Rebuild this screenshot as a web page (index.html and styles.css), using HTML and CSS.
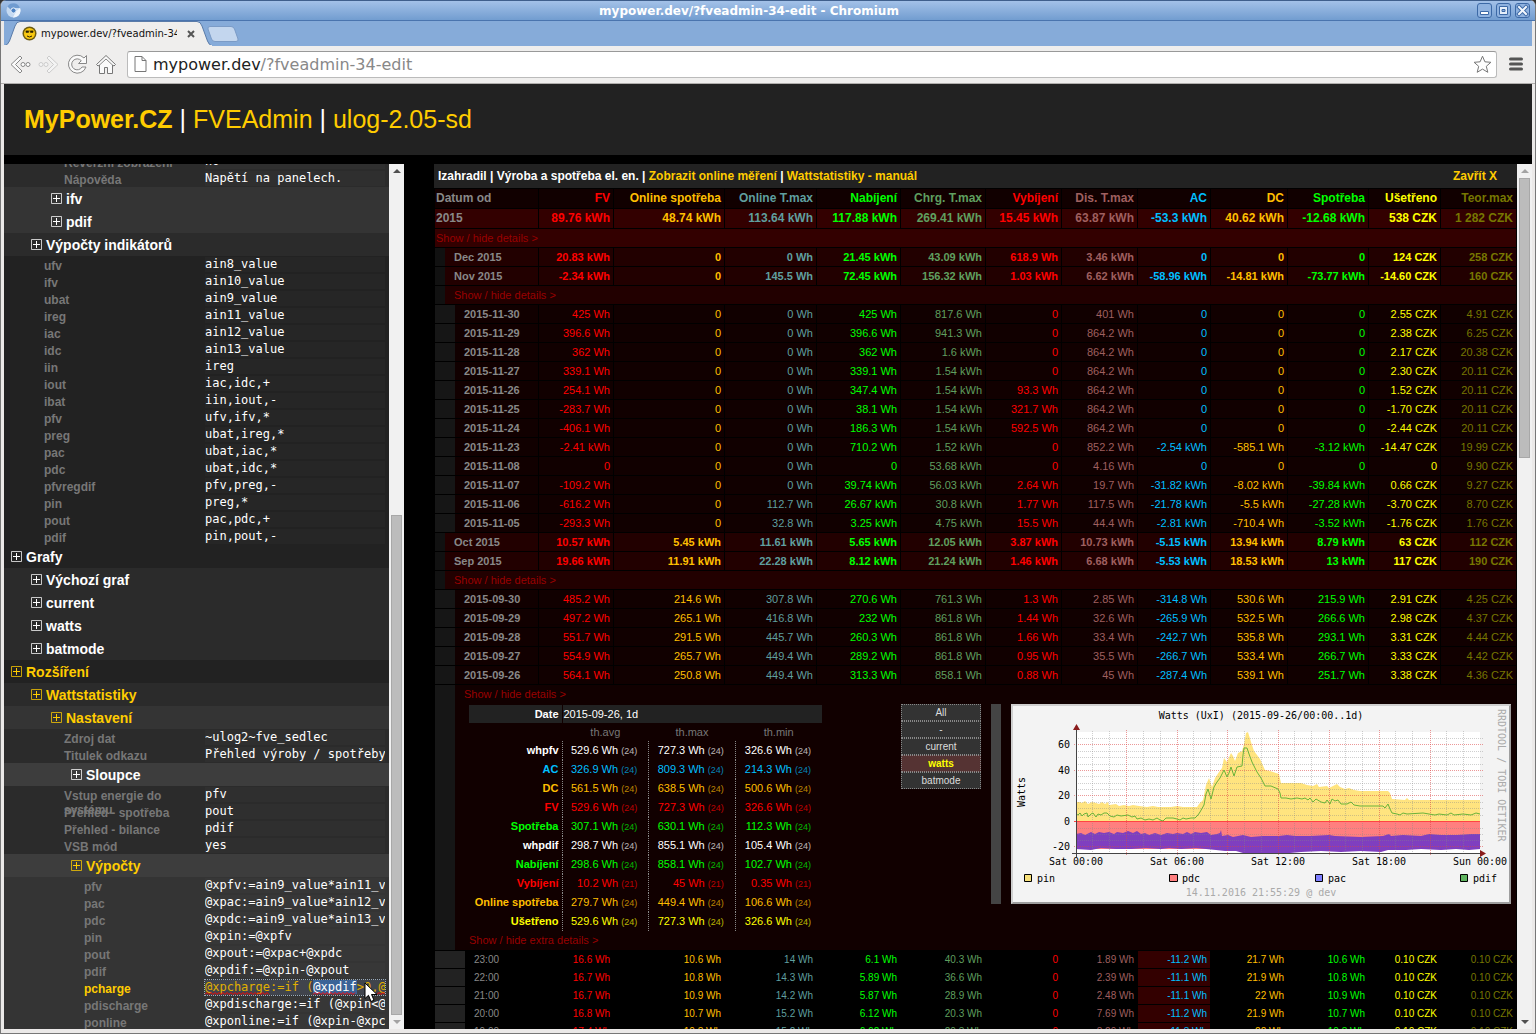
FILE: index.html
```html
<!DOCTYPE html>
<html lang="cs">
<head>
    <meta charset="UTF-8">
    <meta name="viewport" content="width=device-width, initial-scale=1.0">
    <title>mypower.dev/?fveadmin-34-edit</title>
    <link rel="stylesheet" href="styles.css">
</head>
<body>
    <svg class="defs" width="0" height="0" aria-hidden="true">
        <symbol id="plus" viewBox="0 0 11 11">
            <path d="M.5 .5h10v10h-10z" fill="none" stroke="currentColor" stroke-opacity=".75"/>
            <path d="M2 5.500h7M5.500 2v7" stroke="currentColor"/>
        </symbol>
    </svg>

    <div class="window">
        <div class="titlebar">
            <svg class="app-icon" width="15" height="15" viewBox="0 0 15 15" aria-hidden="true">
                <circle cx="7.500" cy="7.500" r="7" fill="#c5daf2"/>
                <path d="M1.500 3.500A7 7 0 0 1 14 5H7.500A2.800 2.800 0 0 0 5 7z" fill="#6f9bd0"/>
                <path d="M14 5A7 7 0 0 1 7 14.500L10 8.500z" fill="#eef5fc"/>
                <circle cx="7.500" cy="7.500" r="2.600" fill="#4d83c4" stroke="#e8f1fb"/>
            </svg>
            <span class="window-title">mypower.dev/?fveadmin-34-edit - Chromium</span>
            <div class="window-buttons">
                <button aria-label="Minimize"><svg width="13" height="13" viewBox="0 0 13 13"><path d="M2.500 7.500h8v3h-8z" fill="#fff" stroke="#3c69a6"/></svg></button>
                <button aria-label="Maximize"><svg width="13" height="13" viewBox="0 0 13 13"><path d="M2.500 2.500h8v8h-8z" fill="#e6effa" stroke="#3c69a6"/><path d="M5 5.500h3v2h-3z" fill="#8fb2df" stroke="#3c69a6"/></svg></button>
                <button aria-label="Close"><svg width="13" height="13" viewBox="0 0 13 13"><path d="M3 3l7 7M10 3l-7 7" stroke="#3c69a6" stroke-width="4" stroke-linecap="square"/><path d="M3 3l7 7M10 3l-7 7" stroke="#f2f7fd" stroke-width="2" stroke-linecap="square"/></svg></button>
            </div>
        </div>

        <div class="tabstrip">
            <div class="tab">
                <svg class="tab-shape" width="208" height="25" viewBox="0 0 208 25" aria-hidden="true">
                    <path d="M0 25Q4 24 5.500 20L11 5Q12.500 .5 16 .5H193Q196.500 .5 198 5L203.500 20Q205 24 208 25z" fill="#efeeed" stroke="#5a7ba8"/>
                    <path d="M0 24.500H208" stroke="#efeeed"/>
                </svg>
                <svg class="favicon" width="15" height="15" viewBox="0 0 15 15" aria-hidden="true">
                    <circle cx="7.500" cy="7.500" r="7" fill="#6b5a10"/>
                    <circle cx="7.500" cy="7.500" r="5.500" fill="#f8c810"/>
                    <path d="M4 5h2.500v1.500H4zM8.500 5H11v1.500H8.500zM3.500 5h8" fill="#2a2000" stroke="#2a2000" stroke-width=".5"/>
                    <path d="M5 10q2.500 2 5 0" fill="none" stroke="#2a2000"/>
                </svg>
                <span class="tab-title">mypower.dev/?fveadmin-34</span>
                <button class="tab-close" aria-label="Close tab"><svg width="8" height="8" viewBox="0 0 8 8"><path d="M1 1l6 6M7 1l-6 6" stroke="#555" stroke-width="2"/></svg></button>
            </div>
            <button class="new-tab" aria-label="New tab"><svg width="32" height="16" viewBox="0 0 32 16"><path d="M3 .5H24Q26.500 .5 27.500 3L31 13Q31.500 15.500 29 15.500H8Q5.500 15.500 4.500 13L1 3Q.5 .5 3 .5z" fill="#c3d6ee" stroke="#7b9bc6"/></svg></button>
        </div>

        <div class="toolbar">
            <button aria-label="Back"><svg width="22" height="21" viewBox="0 0 22 21"><path d="M11 2L2 10.500 11 19l2-2-6.500-6.500L13 4z" fill="#fafafa" stroke="#888"/><circle cx="14" cy="10.500" r="2" fill="#fff" stroke="#888"/><circle cx="19" cy="10.500" r="2" fill="#fff" stroke="#888"/></svg></button>
            <button aria-label="Forward"><svg width="22" height="21" viewBox="0 0 22 21"><path d="M11 2l9 8.500L11 19l-2-2 6.500-6.500L9 4z" fill="#f4f4f4" stroke="#ccc"/><circle cx="8" cy="10.500" r="2" fill="#f4f4f4" stroke="#ccc"/><circle cx="3" cy="10.500" r="2" fill="#f4f4f4" stroke="#ccc"/></svg></button>
            <button aria-label="Reload"><svg width="21" height="21" viewBox="0 0 21 21"><path d="M19.500 1.500v8h-8l2.800-2.800A5.500 5.500 0 1 0 15 13h4A9 9 0 1 1 17 4z" fill="#fafafa" stroke="#888"/></svg></button>
            <button aria-label="Home"><svg width="22" height="21" viewBox="0 0 22 21"><path d="M11 1.500L1.500 10.500l1.500 1.500 1.500-1v8.500h5v-6h3v6h5V11l1.500 1 1.500-1.500z" fill="#fafafa" stroke="#777"/><path d="M4.500 11L11 5l6.500 6" fill="none" stroke="#888"/></svg></button>
            <div class="address">
                <svg width="13" height="16" viewBox="0 0 13 16" aria-hidden="true"><path d="M1 .5h7l4 4v11H1zM8 .5v4h4" fill="#fff" stroke="#777"/></svg>
                <a href="#" class="url">mypower.dev<span>/?fveadmin-34-edit</span></a>
                <svg width="19" height="19" viewBox="0 0 19 19" aria-hidden="true"><path d="M9.500 1.200l2.400 5.600 6 .5-4.600 4 1.500 6-5.300-3.200-5.300 3.200 1.500-6-4.600-4 6-.5z" fill="#fff" stroke="#777" stroke-linejoin="round"/></svg>
            </div>
            <button class="menu-button" aria-label="Menu"><svg width="14" height="14" viewBox="0 0 14 14"><path d="M1.500 2h11M1.500 7h11M1.500 12h11" stroke="#555" stroke-width="3" stroke-linecap="round"/></svg></button>
        </div>

        <div class="page">
            <h1 class="header"><a href="#"><b>MyPower.CZ</b></a> | <a href="#">FVEAdmin</a> | <a href="#">ulog-2.05-sd</a></h1>

            <div class="content">
                <div class="sidebar">
                    <div class="tree">
                        <label class="field f2"><span>Reverzní zobrazení</span><input type="text" value="no"></label>
                        <label class="field f2"><span>Nápověda</span><input type="text" value="Napětí na panelech."></label>
                        <button class="node n2"><svg><use href="#plus"/></svg>ifv</button>
                        <button class="node n2"><svg><use href="#plus"/></svg>pdif</button>
                        <button class="node n1"><svg><use href="#plus"/></svg>Výpočty indikátorů</button>
                        <label class="field f1"><span>ufv</span><input type="text" value="ain8_value"></label>
                        <label class="field f1"><span>ifv</span><input type="text" value="ain10_value"></label>
                        <label class="field f1"><span>ubat</span><input type="text" value="ain9_value"></label>
                        <label class="field f1"><span>ireg</span><input type="text" value="ain11_value"></label>
                        <label class="field f1"><span>iac</span><input type="text" value="ain12_value"></label>
                        <label class="field f1"><span>idc</span><input type="text" value="ain13_value"></label>
                        <label class="field f1"><span>iin</span><input type="text" value="ireg"></label>
                        <label class="field f1"><span>iout</span><input type="text" value="iac,idc,+"></label>
                        <label class="field f1"><span>ibat</span><input type="text" value="iin,iout,-"></label>
                        <label class="field f1"><span>pfv</span><input type="text" value="ufv,ifv,*"></label>
                        <label class="field f1"><span>preg</span><input type="text" value="ubat,ireg,*"></label>
                        <label class="field f1"><span>pac</span><input type="text" value="ubat,iac,*"></label>
                        <label class="field f1"><span>pdc</span><input type="text" value="ubat,idc,*"></label>
                        <label class="field f1"><span>pfvregdif</span><input type="text" value="pfv,preg,-"></label>
                        <label class="field f1"><span>pin</span><input type="text" value="preg,*"></label>
                        <label class="field f1"><span>pout</span><input type="text" value="pac,pdc,+"></label>
                        <label class="field f1"><span>pdif</span><input type="text" value="pin,pout,-"></label>
                        <button class="node n0"><svg><use href="#plus"/></svg>Grafy</button>
                        <button class="node n1"><svg><use href="#plus"/></svg>Výchozí graf</button>
                        <button class="node n1"><svg><use href="#plus"/></svg>current</button>
                        <button class="node n1"><svg><use href="#plus"/></svg>watts</button>
                        <button class="node n1"><svg><use href="#plus"/></svg>batmode</button>
                        <button class="node n0 open"><svg><use href="#plus"/></svg>Rozšíření</button>
                        <button class="node n1 open"><svg><use href="#plus"/></svg>Wattstatistiky</button>
                        <button class="node n2 open"><svg><use href="#plus"/></svg>Nastavení</button>
                        <label class="field f2"><span>Zdroj dat</span><input type="text" value="~ulog2~fve_sedlec"></label>
                        <label class="field f2"><span>Titulek odkazu</span><input type="text" value="Přehled výroby / spotřeby"></label>
                        <button class="node n3"><svg><use href="#plus"/></svg>Sloupce</button>
                        <label class="field f2"><span>Vstup energie do systému</span><input type="text" value="pfv"></label>
                        <label class="field f2"><span>Přehled - spotřeba</span><input type="text" value="pout"></label>
                        <label class="field f2"><span>Přehled - bilance</span><input type="text" value="pdif"></label>
                        <label class="field f2"><span>VSB mód</span><input type="text" value="yes"></label>
                        <button class="node n3 open"><svg><use href="#plus"/></svg>Výpočty</button>
                        <label class="field f3"><span>pfv</span><input type="text" value="@xpfv:=ain9_value*ain11_value"></label>
                        <label class="field f3"><span>pac</span><input type="text" value="@xpac:=ain9_value*ain12_value"></label>
                        <label class="field f3"><span>pdc</span><input type="text" value="@xpdc:=ain9_value*ain13_value"></label>
                        <label class="field f3"><span>pin</span><input type="text" value="@xpin:=@xpfv"></label>
                        <label class="field f3"><span>pout</span><input type="text" value="@xpout:=@xpac+@xpdc"></label>
                        <label class="field f3"><span>pdif</span><input type="text" value="@xpdif:=@xpin-@xpout"></label>
                        <label class="field f3 active"><span>pcharge</span><input type="text" id="pcharge" value="@xpcharge:=if (@xpdif>0,@xpdif,0)">
                            <svg class="spelling" width="180" height="3" viewBox="0 0 180 3" aria-hidden="true"><path d="M0 2.500l2-2 2 2 2-2 2 2 2-2 2 2 2-2 2 2 2-2 2 2 2-2 2 2 2-2 2 2 2-2 2 2 2-2 2 2 2-2 2 2 2-2 2 2 2-2 2 2 2-2 2 2 2-2 2 2 2-2 2 2 2-2 2 2M108 2.500l2-2 2 2 2-2 2 2 2-2 2 2 2-2 2 2 2-2 2 2 2-2 2 2 2-2 2 2 2-2 2 2 2-2 2 2 2-2 2 2 2-2M172 2.500l2-2 2 2 2-2 2 2" fill="none" stroke="#f00"/></svg>
                            <svg class="cursor" width="14" height="21" viewBox="0 0 14 21" aria-hidden="true"><path d="M1 1v15.500l3.500-3.200L7 19.500l3-1.300-2.500-5.700H13z" fill="#fff" stroke="#000"/></svg>
                        </label>
                        <label class="field f3"><span>pdischarge</span><input type="text" value="@xpdischarge:=if (@xpin<@xpout,@xpdif,0)"></label>
                        <label class="field f3"><span>ponline</span><input type="text" value="@xponline:=if (@xpin-@xpcharge)"></label>
                    </div>
                    <div class="scrollbar side-scroll">
                        <i class="up"></i><div class="track"><div class="thumb"></div></div><i class="down"></i>
                    </div>
                </div>

                <div class="main">
                    <div class="stats-wrap">
                        <div class="topbar">
                            <div>Izahradil | Výroba a spotřeba el. en. | <a href="#">Zobrazit online měření</a> | <a href="#">Wattstatistiky - manuál</a></div>
                            <a href="#">Zavřít X</a>
                        </div>
                        <table class="stats">
                            <colgroup>
                                <col class="w-date"><col class="w-fv"><col class="w-online"><col class="w-onmax"><col class="w-nab"><col class="w-chrg"><col class="w-vyb"><col class="w-dis"><col class="w-ac"><col class="w-dc"><col class="w-spot"><col class="w-usetr"><col class="w-teor">
                            </colgroup>
                            <tbody>
                                <tr class="head"><th>Datum od</th><td>FV</td><td>Online spotřeba</td><td>Online T.max</td><td>Nabíjení</td><td>Chrg. T.max</td><td>Vybíjení</td><td>Dis. T.max</td><td>AC</td><td>DC</td><td>Spotřeba</td><td>Ušetřeno</td><td>Teor.max</td></tr>
                                <tr class="year"><th>2015</th><td>89.76 kWh</td><td>48.74 kWh</td><td>113.64 kWh</td><td>117.88 kWh</td><td>269.41 kWh</td><td>15.45 kWh</td><td>63.87 kWh</td><td>-53.3 kWh</td><td>40.62 kWh</td><td>-12.68 kWh</td><td>538 CZK</td><td>1 282 CZK</td></tr>
                                <tr class="year more"><td colspan="13"><a href="#">Show / hide details &gt;</a></td></tr>
                                <tr class="month"><th>Dec 2015</th><td>20.83 kWh</td><td>0</td><td>0 Wh</td><td>21.45 kWh</td><td>43.09 kWh</td><td>618.9 Wh</td><td>3.46 kWh</td><td>0</td><td>0</td><td>0</td><td>124 CZK</td><td>258 CZK</td></tr>
                                <tr class="month"><th>Nov 2015</th><td>-2.34 kWh</td><td>0</td><td>145.5 Wh</td><td>72.45 kWh</td><td>156.32 kWh</td><td>1.03 kWh</td><td>6.62 kWh</td><td>-58.96 kWh</td><td>-14.81 kWh</td><td>-73.77 kWh</td><td>-14.60 CZK</td><td>160 CZK</td></tr>
                                <tr class="month more"><td colspan="13"><a href="#">Show / hide details &gt;</a></td></tr>
                                <tr class="day"><th>2015-11-30</th><td>425 Wh</td><td>0</td><td>0 Wh</td><td>425 Wh</td><td>817.6 Wh</td><td>0</td><td>401 Wh</td><td>0</td><td>0</td><td>0</td><td>2.55 CZK</td><td>4.91 CZK</td></tr>
                                <tr class="day"><th>2015-11-29</th><td>396.6 Wh</td><td>0</td><td>0 Wh</td><td>396.6 Wh</td><td>941.3 Wh</td><td>0</td><td>864.2 Wh</td><td>0</td><td>0</td><td>0</td><td>2.38 CZK</td><td>6.25 CZK</td></tr>
                                <tr class="day"><th>2015-11-28</th><td>362 Wh</td><td>0</td><td>0 Wh</td><td>362 Wh</td><td>1.6 kWh</td><td>0</td><td>864.2 Wh</td><td>0</td><td>0</td><td>0</td><td>2.17 CZK</td><td>20.38 CZK</td></tr>
                                <tr class="day"><th>2015-11-27</th><td>339.1 Wh</td><td>0</td><td>0 Wh</td><td>339.1 Wh</td><td>1.54 kWh</td><td>0</td><td>864.2 Wh</td><td>0</td><td>0</td><td>0</td><td>2.30 CZK</td><td>20.11 CZK</td></tr>
                                <tr class="day"><th>2015-11-26</th><td>254.1 Wh</td><td>0</td><td>0 Wh</td><td>347.4 Wh</td><td>1.54 kWh</td><td>93.3 Wh</td><td>864.2 Wh</td><td>0</td><td>0</td><td>0</td><td>1.52 CZK</td><td>20.11 CZK</td></tr>
                                <tr class="day"><th>2015-11-25</th><td>-283.7 Wh</td><td>0</td><td>0 Wh</td><td>38.1 Wh</td><td>1.54 kWh</td><td>321.7 Wh</td><td>864.2 Wh</td><td>0</td><td>0</td><td>0</td><td>-1.70 CZK</td><td>20.11 CZK</td></tr>
                                <tr class="day"><th>2015-11-24</th><td>-406.1 Wh</td><td>0</td><td>0 Wh</td><td>186.3 Wh</td><td>1.54 kWh</td><td>592.5 Wh</td><td>864.2 Wh</td><td>0</td><td>0</td><td>0</td><td>-2.44 CZK</td><td>20.11 CZK</td></tr>
                                <tr class="day"><th>2015-11-23</th><td>-2.41 kWh</td><td>0</td><td>0 Wh</td><td>710.2 Wh</td><td>1.52 kWh</td><td>0</td><td>852.2 Wh</td><td>-2.54 kWh</td><td>-585.1 Wh</td><td>-3.12 kWh</td><td>-14.47 CZK</td><td>19.99 CZK</td></tr>
                                <tr class="day"><th>2015-11-08</th><td>0</td><td>0</td><td>0 Wh</td><td>0</td><td>53.68 kWh</td><td>0</td><td>4.16 Wh</td><td>0</td><td>0</td><td>0</td><td>0</td><td>9.90 CZK</td></tr>
                                <tr class="day"><th>2015-11-07</th><td>-109.2 Wh</td><td>0</td><td>0 Wh</td><td>39.74 kWh</td><td>56.03 kWh</td><td>2.64 Wh</td><td>19.7 Wh</td><td>-31.82 kWh</td><td>-8.02 kWh</td><td>-39.84 kWh</td><td>0.66 CZK</td><td>9.27 CZK</td></tr>
                                <tr class="day"><th>2015-11-06</th><td>-616.2 Wh</td><td>0</td><td>112.7 Wh</td><td>26.67 kWh</td><td>30.8 kWh</td><td>1.77 Wh</td><td>117.5 Wh</td><td>-21.78 kWh</td><td>-5.5 kWh</td><td>-27.28 kWh</td><td>-3.70 CZK</td><td>8.70 CZK</td></tr>
                                <tr class="day"><th>2015-11-05</th><td>-293.3 Wh</td><td>0</td><td>32.8 Wh</td><td>3.25 kWh</td><td>4.75 kWh</td><td>15.5 Wh</td><td>44.4 Wh</td><td>-2.81 kWh</td><td>-710.4 Wh</td><td>-3.52 kWh</td><td>-1.76 CZK</td><td>1.76 CZK</td></tr>
                                <tr class="month"><th>Oct 2015</th><td>10.57 kWh</td><td>5.45 kWh</td><td>11.61 kWh</td><td>5.65 kWh</td><td>12.05 kWh</td><td>3.87 kWh</td><td>10.73 kWh</td><td>-5.15 kWh</td><td>13.94 kWh</td><td>8.79 kWh</td><td>63 CZK</td><td>112 CZK</td></tr>
                                <tr class="month"><th>Sep 2015</th><td>19.66 kWh</td><td>11.91 kWh</td><td>22.28 kWh</td><td>8.12 kWh</td><td>21.24 kWh</td><td>1.46 kWh</td><td>6.68 kWh</td><td>-5.53 kWh</td><td>18.53 kWh</td><td>13 kWh</td><td>117 CZK</td><td>190 CZK</td></tr>
                                <tr class="month more"><td colspan="13"><a href="#">Show / hide details &gt;</a></td></tr>
                                <tr class="day"><th>2015-09-30</th><td>485.2 Wh</td><td>214.6 Wh</td><td>307.8 Wh</td><td>270.6 Wh</td><td>761.3 Wh</td><td>1.3 Wh</td><td>2.85 Wh</td><td>-314.8 Wh</td><td>530.6 Wh</td><td>215.9 Wh</td><td>2.91 CZK</td><td>4.25 CZK</td></tr>
                                <tr class="day"><th>2015-09-29</th><td>497.2 Wh</td><td>265.1 Wh</td><td>416.8 Wh</td><td>232 Wh</td><td>861.8 Wh</td><td>1.44 Wh</td><td>32.6 Wh</td><td>-265.9 Wh</td><td>532.5 Wh</td><td>266.6 Wh</td><td>2.98 CZK</td><td>4.37 CZK</td></tr>
                                <tr class="day"><th>2015-09-28</th><td>551.7 Wh</td><td>291.5 Wh</td><td>445.7 Wh</td><td>260.3 Wh</td><td>861.8 Wh</td><td>1.66 Wh</td><td>33.4 Wh</td><td>-242.7 Wh</td><td>535.8 Wh</td><td>293.1 Wh</td><td>3.31 CZK</td><td>4.44 CZK</td></tr>
                                <tr class="day"><th>2015-09-27</th><td>554.9 Wh</td><td>265.7 Wh</td><td>449.4 Wh</td><td>289.2 Wh</td><td>861.8 Wh</td><td>0.95 Wh</td><td>35.5 Wh</td><td>-266.7 Wh</td><td>533.4 Wh</td><td>266.7 Wh</td><td>3.33 CZK</td><td>4.42 CZK</td></tr>
                                <tr class="day"><th>2015-09-26</th><td>564.1 Wh</td><td>250.8 Wh</td><td>449.4 Wh</td><td>313.3 Wh</td><td>858.1 Wh</td><td>0.88 Wh</td><td>45 Wh</td><td>-287.4 Wh</td><td>539.1 Wh</td><td>251.7 Wh</td><td>3.38 CZK</td><td>4.36 CZK</td></tr>
                                <tr class="day more">
                                    <td colspan="13">
                                        <a href="#">Show / hide details &gt;</a>
                                        <div class="details">
                                            <div class="summary">
                                                <table class="avg">
                                                    <tbody>
                                                        <tr class="date"><th>Date</th><td colspan="3">2015-09-26, 1d</td></tr>
                                                        <tr class="cols"><th></th><td>th.avg</td><td>th.max</td><td>th.min</td></tr>
                                                        <tr class="white"><th>whpfv</th><td>529.6 Wh <small>(24)</small></td><td>727.3 Wh <small>(24)</small></td><td>326.6 Wh <small>(24)</small></td></tr>
                                                        <tr class="blue"><th>AC</th><td>326.9 Wh <small>(24)</small></td><td>809.3 Wh <small>(24)</small></td><td>214.3 Wh <small>(24)</small></td></tr>
                                                        <tr class="orange"><th>DC</th><td>561.5 Wh <small>(24)</small></td><td>638.5 Wh <small>(24)</small></td><td>500.6 Wh <small>(24)</small></td></tr>
                                                        <tr class="red"><th>FV</th><td>529.6 Wh <small>(24)</small></td><td>727.3 Wh <small>(24)</small></td><td>326.6 Wh <small>(24)</small></td></tr>
                                                        <tr class="green"><th>Spotřeba</th><td>307.1 Wh <small>(24)</small></td><td>630.1 Wh <small>(24)</small></td><td>112.3 Wh <small>(24)</small></td></tr>
                                                        <tr class="white"><th>whpdif</th><td>298.7 Wh <small>(24)</small></td><td>855.1 Wh <small>(24)</small></td><td>105.4 Wh <small>(24)</small></td></tr>
                                                        <tr class="green"><th>Nabíjení</th><td>298.6 Wh <small>(24)</small></td><td>858.1 Wh <small>(24)</small></td><td>102.7 Wh <small>(24)</small></td></tr>
                                                        <tr class="red"><th>Vybíjení</th><td>10.2 Wh <small>(21)</small></td><td>45 Wh <small>(21)</small></td><td>0.35 Wh <small>(21)</small></td></tr>
                                                        <tr class="orange"><th>Online spotřeba</th><td>279.7 Wh <small>(24)</small></td><td>449.4 Wh <small>(24)</small></td><td>106.6 Wh <small>(24)</small></td></tr>
                                                        <tr class="yellow"><th>Ušetřeno</th><td>529.6 Wh <small>(24)</small></td><td>727.3 Wh <small>(24)</small></td><td>326.6 Wh <small>(24)</small></td></tr>
                                                    </tbody>
                                                </table>
                                                <a href="#">Show / hide extra details &gt;</a>
                                            </div>
                                            <div class="graphs">
                                                <button>All</button>
                                                <button>-</button>
                                                <button>current</button>
                                                <button class="selected">watts</button>
                                                <button>batmode</button>
                                            </div>
                                            <div class="divider"></div>
                                            <svg class="chart" width="500" height="200" viewBox="0 0 500 200" role="img" aria-label="Watts (UxI)">
                                                <path d="M0 0h500v200H0z" fill="#f3f3f3"/>
                                                <path d="M0 0h500l-2 2H2v196l-2 2z" fill="#cfcfcf"/>
                                                <path d="M500 0v200H0l2-2h496V2z" fill="#9e9e9e"/>
                                                <path d="M65 28h404v121H65z" fill="#fff"/>
                                                <path d="M65 117V98L69 98 71 99 74 97 77 100 81 98 85 99 88 100 91 98 94 100 97 98 98 101 105 100 108 102 113 101 118 102 122 101 128 102 136 103 142 102 147 103 160 103 166 102 172 103 186 103 188 100 192 96 195 81 198 74 201 83 204 74 208 68 211 64 213 54 216 58 220 49 222 52 224 57 227 49 231 47 233 40 235 29 237 28 240 38 243 47 246 51 249 55 254 66 259 67 268 70 270 79 290 79 296 81 302 82 306 80 308 83 316 82 318 84 322 82 326 80 329 83 334 85 338 84 343 86 349 87 377 87 379 89 381 95 394 96 396 94 398 96 469 96V117z" fill="#ffe47f"/>
                                                <path d="M65 117h404v28H65z" fill="#ff7f7f"/>
                                                <path d="M65 130L70 129 74 131 80 128 84 130 88 128 93 129 98 128 103 130 106 128 112 129 117 127 122 129 126 127 130 130 134 129 138 131 144 129 150 131 156 129 162 130 166 129 172 130 176 128 180 130 184 128 190 129 196 128 200 131 206 130 209 129 210 126 211 132 217 131 222 133 232 131 240 133 252 132 268 132 276 131 284 132 300 132 318 131 324 132 350 133 372 132 378 130 380 132 392 131 410 132 418 130 430 131 446 131 460 130 469 130V145L458 146 445 145 430 146 410 145 395 146 377 146 370 148 350 147 330 148 310 147 290 148 279 149 232 149 225 147 214 147 205 146 195 145 185 144 170 145 158 144 150 145 135 144 120 145 105 145 90 144 80 146 65 145z" fill="#7f3fbf"/>
                                                <g fill="none" stroke="#888" stroke-opacity=".4" stroke-dasharray="1 1">
                                                    <path d="M65 34.500h407M65 47.500h407M65 53.500h407M65 60.500h407M65 72.500h407M65 79.500h407M65 85.500h407M65 98.500h407M65 104.500h407M65 111.500h407M65 124.500h407M65 130.500h407M65 136.500h407"/>
                                                    <path d="M81.500 27v123M98.500 27v123M132.500 27v123M149.500 27v123M182.500 27v123M199.500 27v123M233.500 27v123M250.500 27v123M283.500 27v123M300.500 27v123M334.500 27v123M351.500 27v123M384.500 27v123M401.500 27v123M435.500 27v123M452.500 27v123"/>
                                                </g>
                                                <g fill="none" stroke="#d44" stroke-opacity=".55" stroke-dasharray="1 1">
                                                    <path d="M63 40.500h410M63 66.500h410M63 91.500h410M63 142.500h410"/>
                                                    <path d="M115.500 26v126M166.500 26v126M216.500 26v126M267.500 26v126M318.500 26v126M368.500 26v126M419.500 26v126"/>
                                                </g>
                                                <path d="M63 117.500h406" stroke="#f44"/>
                                                <path d="M65 110L67 111 69 109 71 112 73 110 76 109 77 113 80 110 82 109 85 113 87 110 90 111 93 109 96 109 99 112 103 113 106 111 110 112 117 111 121 113 124 112 126 115 130 114 134 116 138 115 142 116 146 114 149 116 152 117 155 114 162 114 166 115 169 116 172 114 175 115 180 114 184 114 187 111 189 108 193 101 195 90 197 85 200 95 203 83 206 78 209 74 213 66 216 73 218 69 220 63 223 72 226 63 231 62 232 51 233 44 236 44 238 50 241 58 246 68 250 74 254 82 260 82 267 85 269 89 270 94 275 94 280 95 286 94 291 95 294 94 297 96 299 94 302 98 305 95 310 98 314 99 316 96 319 100 321 95 324 97 327 96 330 100 336 100 340 98 343 101 349 102 372 102 374 104 377 100 379 105 381 109 386 110 389 111 392 109 396 110 412 109 424 111 428 110 436 111 440 109 443 111 452 110 460 111 465 109 469 110" fill="none" stroke="#6bb33a"/>
                                                <path d="M65.500 153V24M61 149.500h410" stroke="#444"/>
                                                <path d="M62 26l3.500-6 3.500 6zM469 146l6 3.500-6 3.500z" fill="#8a1c1c"/>
                                                <g class="chart-text">
                                                    <text x="250" y="15" text-anchor="middle">Watts (UxI) (2015-09-26/00:00..1d)</text>
                                                    <g text-anchor="end">
                                                        <text x="59" y="44">60</text>
                                                        <text x="59" y="70">40</text>
                                                        <text x="59" y="95">20</text>
                                                        <text x="59" y="121">0</text>
                                                        <text x="59" y="146">-20</text>
                                                    </g>
                                                    <g text-anchor="middle">
                                                        <text x="65" y="161">Sat 00:00</text>
                                                        <text x="166" y="161">Sat 06:00</text>
                                                        <text x="267" y="161">Sat 12:00</text>
                                                        <text x="368" y="161">Sat 18:00</text>
                                                        <text x="469" y="161">Sun 00:00</text>
                                                        <text transform="translate(14 88) rotate(-90)">Watts</text>
                                                    </g>
                                                    <text x="26" y="178">pin</text>
                                                    <text x="171" y="178">pdc</text>
                                                    <text x="317" y="178">pac</text>
                                                    <text x="462" y="178">pdif</text>
                                                    <text class="faint" x="250" y="192" text-anchor="middle">14.11.2016 21:55:29 @ dev</text>
                                                    <text class="faint" transform="translate(487 5) rotate(90)">RRDTOOL / TOBI OETIKER</text>
                                                </g>
                                                <g stroke="#000">
                                                    <path d="M13.500 170.500h7v7h-7z" fill="#f7e07a"/>
                                                    <path d="M158.500 170.500h8v7h-8z" fill="#ff7f7f"/>
                                                    <path d="M304.500 170.500h7v7h-7z" fill="#7f7fff"/>
                                                    <path d="M449.500 170.500h7v7h-7z" fill="#5fb35f"/>
                                                </g>
                                            </svg>
                                        </div>
                                    </td>
                                </tr>
                                <tr class="hour"><th>23:00</th><td>16.6 Wh</td><td>10.6 Wh</td><td>14 Wh</td><td>6.1 Wh</td><td>40.3 Wh</td><td>0</td><td>1.89 Wh</td><td>-11.2 Wh</td><td>21.7 Wh</td><td>10.6 Wh</td><td>0.10 CZK</td><td>0.10 CZK</td></tr>
                                <tr class="hour"><th>22:00</th><td>16.7 Wh</td><td>10.8 Wh</td><td>14.3 Wh</td><td>5.89 Wh</td><td>36.6 Wh</td><td>0</td><td>2.39 Wh</td><td>-11.1 Wh</td><td>21.9 Wh</td><td>10.8 Wh</td><td>0.10 CZK</td><td>0.10 CZK</td></tr>
                                <tr class="hour"><th>21:00</th><td>16.7 Wh</td><td>10.9 Wh</td><td>14.2 Wh</td><td>5.87 Wh</td><td>28.9 Wh</td><td>0</td><td>2.48 Wh</td><td>-11.1 Wh</td><td>22 Wh</td><td>10.9 Wh</td><td>0.10 CZK</td><td>0.10 CZK</td></tr>
                                <tr class="hour"><th>20:00</th><td>16.8 Wh</td><td>10.7 Wh</td><td>15.2 Wh</td><td>6.12 Wh</td><td>20.3 Wh</td><td>0</td><td>7.69 Wh</td><td>-11.2 Wh</td><td>21.9 Wh</td><td>10.7 Wh</td><td>0.10 CZK</td><td>0.10 CZK</td></tr>
                                <tr class="hour"><th>19:00</th><td>17.4 Wh</td><td>10.8 Wh</td><td>15.2 Wh</td><td>6.62 Wh</td><td>20.3 Wh</td><td>0</td><td>8.29 Wh</td><td>-11.3 Wh</td><td>22 Wh</td><td>10.8 Wh</td><td>0.10 CZK</td><td>0.10 CZK</td></tr>
                            </tbody>
                        </table>
                    </div>
                    <div class="scrollbar main-scroll">
                        <i class="up off"></i><div class="track"><div class="thumb"></div></div><i class="down"></i>
                    </div>
                </div>
            </div>
        </div>
    </div>

    <script>
        // keep the edited expression focused, with the variable selected
        let field = document.getElementById("pcharge");
        let start = field.value.indexOf("@xpdif");
        field.focus({ preventScroll: true });
        field.setSelectionRange(start, start + 6);
    </script>
</body>
</html>
```

FILE: styles.css
```css
* {
    box-sizing: border-box;
}
body {
    margin: 0;
    height: 100vh;
    overflow: hidden;
    background-color: #333;
    font-family: "Liberation Sans", Arial, sans-serif;
    font-size: 12px;
}
a {
    color: inherit;
    text-decoration: none;
}
button {
    margin: 0;
    padding: 0;
    border: none;
    background: none;
    font: inherit;
    color: inherit;
    cursor: pointer;
}
svg {
    display: block;
    flex: none;
}
.defs {
    position: absolute;
}

/* browser window */
.window {
    display: flex;
    flex-direction: column;
    height: 100vh;
    background-color: #ebe9e8;
    border: solid #777;
    border-width: 0 1px 1px;
    border-radius: 6px 6px 0 0;
    overflow: hidden;
}
.titlebar {
    display: flex;
    align-items: center;
    height: 21px;
    padding: 0 5px;
    border-top: 1px solid #3f5f8c;
    border-bottom: 1px solid #4a74ae;
    background: linear-gradient(#a3c1e8, #729dd0);
    color: #fff;
}
.window-title {
    flex: 1;
    text-align: center;
    font: bold 12px "DejaVu Sans", sans-serif;
}
.window-buttons {
    display: flex;
    gap: 4px;
}
.window-buttons button {
    width: 15px;
    height: 15px;
    border: 1px solid #3c69a6;
    border-radius: 3px;
    background-color: #8fb2df;
}
.tabstrip {
    display: flex;
    height: 25px;
    margin: 0 3px;
    background-color: #86abd9;
}
.tab {
    position: relative;
    display: flex;
    align-items: center;
    width: 208px;
    padding: 0 17px 0 18px;
}
.tab-shape {
    position: absolute;
    left: 0;
    top: 0;
}
.favicon,
.tab-title,
.tab-close {
    position: relative;
}
.tab-title {
    flex: 1;
    margin: 0 10px 0 4px;
    overflow: hidden;
    white-space: nowrap;
    font: 10px "DejaVu Sans", sans-serif;
    color: #111;
}
.new-tab {
    align-self: center;
    margin-left: -5px;
}
.toolbar {
    display: flex;
    align-items: center;
    gap: 7px;
    height: 38px;
    padding: 0 12px 1px 8px;
    border-bottom: 1px solid #b0aeac;
    background-color: #efeeed;
}
.address {
    flex: 1;
    display: flex;
    align-items: center;
    gap: 6px;
    height: 27px;
    margin-left: 3px;
    padding: 0 4px 0 6px;
    border: 1px solid #bbb;
    border-top-color: #999;
    border-radius: 3px;
    background-color: #fff;
}
.url {
    flex: 1;
    font: 16px "DejaVu Sans", sans-serif;
    color: #222;
}
.url span {
    color: #888;
}
.menu-button {
    margin-left: 5px;
}

/* page */
.page {
    flex: 1;
    display: flex;
    flex-direction: column;
    min-height: 0;
    margin: 0 3px 4px;
    background-color: #000;
}
.header {
    margin: 0 0 9px;
    padding: 0 20px;
    background-color: #222;
    color: #fff;
    font-size: 25px;
    font-weight: normal;
    line-height: 71px;
}
.header a {
    color: #fc0;
}
.content {
    flex: 1;
    display: flex;
    gap: 30px;
    min-height: 0;
}
.sidebar {
    display: flex;
    width: 400px;
    overflow: hidden;
}
.tree {
    flex: 1;
    margin-top: -11px;
}
.node {
    display: flex;
    align-items: center;
    gap: 4px;
    width: 100%;
    height: 23px;
    color: #fff;
    font-size: 14px;
    font-weight: bold;
}
.node svg {
    width: 11px;
    height: 11px;
}
.node.open {
    color: #fc0;
}
.n0 {
    padding-left: 7px;
    background-color: #222;
}
.n1 {
    padding-left: 27px;
    background-color: #2b2b2b;
}
.n2 {
    padding-left: 47px;
    background-color: #343434;
}
.n3 {
    padding-left: 67px;
    background-color: #3d3d3d;
}
.field {
    position: relative;
    display: flex;
    height: 17px;
    padding: 1px 4px 0 40px;
    background-color: #222;
}
.field span {
    position: relative;
    z-index: 1;
    flex: 1;
    padding: 2px 24px 0 0;
    color: #777;
    font-weight: bold;
    line-height: 14px;
}
.f2 {
    padding-left: 60px;
    background-color: #2b2b2b;
}
.f3 {
    padding-left: 80px;
    background-color: #343434;
}
.field input {
    width: 180px;
    height: 15px;
    padding: 0 0 2px;
    border: none;
    outline: none;
    background-color: rgba(255, 255, 255, 0.02);
    color: #fff;
    font: 12px "DejaVu Sans Mono", monospace;
    line-height: 13px;
}
.field.active span {
    color: #fc0;
}
.field.active input {
    outline: 1px dotted #9ab;
    background-color: #40444c;
    color: #e0b000;
}
.field input::selection {
    background-color: #3a6397;
    color: #fff;
}
.spelling {
    position: absolute;
    right: 4px;
    bottom: 1px;
}
.cursor {
    position: absolute;
    right: 11px;
    top: 3px;
    z-index: 2;
}

/* scrollbars */
.scrollbar {
    display: flex;
    flex-direction: column;
    flex: none;
    width: 15px;
    background-color: #f1f1f1;
}
.scrollbar i {
    align-self: center;
    margin: 5px 0;
    border: 4px solid transparent;
}
.scrollbar .up {
    border-top: none;
    border-bottom-color: #505050;
}
.scrollbar .down {
    border-bottom: none;
    border-top-color: #505050;
}
.scrollbar .up.off {
    border-bottom-color: #a3a3a3;
}
.side-scroll .down {
    border-top-color: #a3a3a3;
}
.track {
    flex: 1;
    padding: 0 2px;
}
.thumb {
    border: 1px solid #a8a8a8;
    background-color: #bcbcbc;
}
.side-scroll .track {
    display: flex;
    flex-direction: column;
    justify-content: flex-end;
}
.side-scroll .thumb {
    height: 59.7%;
}
.main-scroll .thumb {
    height: 33.5%;
}

/* statistics */
.main {
    flex: 1;
    display: flex;
    min-width: 0;
    overflow: hidden;
}
.stats-wrap {
    flex: 1;
    min-width: 0;
}
.topbar {
    display: flex;
    justify-content: space-between;
    padding: 0 20px 0 4px;
    background-color: #222;
    color: #fff;
    font-weight: bold;
    line-height: 24px;
}
.topbar a {
    color: #fc0;
}
.stats {
    width: 100%;
    table-layout: fixed;
    border-collapse: separate;
    border-spacing: 1px;
    font-size: 11px;
    line-height: 18px;
    white-space: nowrap;
}
.w-date { width: 103px; }
.w-fv { width: 74px; }
.w-online { width: 110px; }
.w-onmax { width: 91px; }
.w-nab { width: 83px; }
.w-chrg { width: 84px; }
.w-vyb { width: 75px; }
.w-dis { width: 75px; }
.w-ac { width: 72px; }
.w-dc { width: 76px; }
.w-spot { width: 80px; }
.w-usetr { width: 71px; }
.w-teor { width: 75px; }
.stats th,
.stats td {
    padding: 0 3px;
    text-align: right;
}
.stats > tbody > tr > th {
    padding-left: 9px;
    text-align: left;
    color: #888;
}
.stats td:nth-child(2) { color: #f00; }
.stats td:nth-child(3) { color: #ffbf00; }
.stats td:nth-child(4) { color: #5f9f9f; }
.stats td:nth-child(5) { color: #0f0; }
.stats td:nth-child(6) { color: #5f9f5f; }
.stats td:nth-child(7) { color: #f00; }
.stats td:nth-child(8) { color: #9f5f5f; }
.stats td:nth-child(9) { color: #00bfff; }
.stats td:nth-child(10) { color: #ffbf00; }
.stats td:nth-child(11) { color: #0f0; }
.stats td:nth-child(12) { color: #ff0; }
.stats td:nth-child(13) { color: #770; }
.head,
.year {
    font-size: 12px;
    font-weight: bold;
    line-height: 19px;
}
.head > th,
.head > td {
    background-color: #100;
}
.stats > tbody > .head > th,
.stats > tbody > .year > th {
    padding-left: 1px;
}
.year > th,
.year > td {
    background-color: #300;
}
.month {
    font-weight: bold;
}
.month > th,
.month > td {
    background-color: #200;
}
.month > :first-child {
    border-left: 10px solid #111;
}
.day > th,
.day > td {
    background-color: #100;
}
.day > :first-child {
    border-left: 20px solid #161616;
}
.hour {
    font-size: 10px;
    line-height: 17px;
}
.hour > th {
    border-left: 30px solid #222;
    font-weight: normal;
}
.hour > td:nth-child(9) {
    background-color: #300;
}
.stats .more {
    font-size: 11px;
    font-weight: normal;
    line-height: 18px;
}
.stats .more > td {
    text-align: left;
    padding-left: 9px;
}
.stats .year.more > td {
    padding-left: 1px;
}
.more a {
    color: #900;
}

/* day details */
.details {
    display: flex;
    align-items: flex-start;
    gap: 10px;
    margin: 1px 2px 0 5px;
}
.summary {
    flex: none;
    width: 353px;
    margin-right: auto;
}
.summary > a {
    display: block;
    line-height: 19px;
}
.avg {
    width: 100%;
    margin-top: 1px;
    table-layout: fixed;
    border-collapse: collapse;
    line-height: 19px;
}
.stats .avg th {
    width: 93px;
    padding-left: 0;
}
.stats .avg td {
    padding-right: 11px;
    border-left: 1px dotted #888;
    color: inherit;
}
.stats .avg .cols td {
    border: none;
    padding: 0;
    text-align: center;
    color: #777;
}
.avg .date,
.avg .cols {
    line-height: 18px;
}
.stats .avg .date {
    background-color: #222;
    color: #fff;
}
.stats .avg .date td {
    padding-left: 1px;
    border-left: 1px solid #100;
    text-align: left;
}
.avg small {
    font-size: 9px;
    line-height: 1;
    opacity: 0.7;
}
.white { color: #fff; }
.blue { color: #00bfff; }
.orange { color: #ffbf00; }
.red { color: #f00; }
.green { color: #0f0; }
.yellow { color: #ff0; }
.graphs {
    display: flex;
    flex-direction: column;
    width: 80px;
}
.graphs button {
    height: 17px;
    border: 1px dotted #888;
    background-color: #333;
    color: #ddd;
    font-size: 10px;
    line-height: 15px;
}
.graphs .selected {
    background-color: #533;
    color: #ff0;
    font-weight: bold;
}
.divider {
    width: 10px;
    height: 200px;
    background-color: #444;
}
.chart-text {
    font: 10px "DejaVu Sans Mono", monospace;
}
.chart-text .faint {
    fill: #aaa;
}
```
